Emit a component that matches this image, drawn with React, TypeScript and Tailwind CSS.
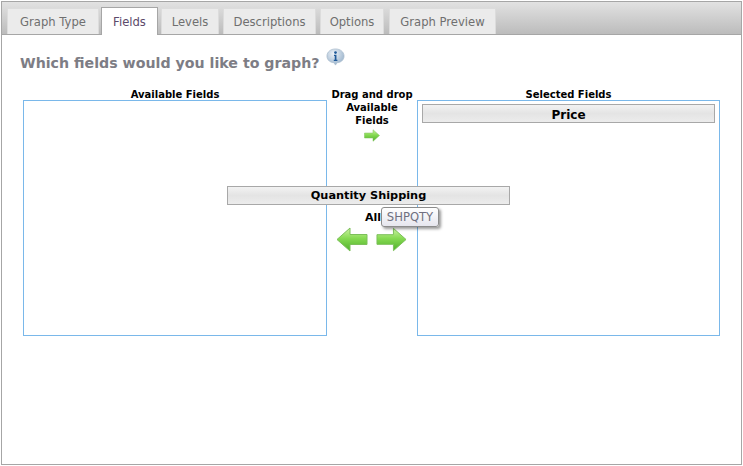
const tabs = [
  { label: 'Graph Type', className: 'w-[92px]' },
  { label: 'Fields', className: 'w-[57px] ml-[2px]', active: true },
  { label: 'Levels', className: 'w-[58px] ml-[3px]' },
  { label: 'Descriptions', className: 'w-[93px] ml-[4px]' },
  { label: 'Options', className: 'w-[64px] ml-[4px]' },
  { label: 'Graph Preview', className: 'w-[107px] ml-[5px]' },
];

const Arrow = ({ className, flip }: { className: string; flip?: boolean }) => (
  <svg viewBox="0 0 32 25" className={className}>
    <defs>
      <linearGradient id="arrowFill" x1="0" y1="0" x2="0" y2="1">
        <stop offset="0" stopColor="#cdf3a2" />
        <stop offset="0.45" stopColor="#86da52" />
        <stop offset="1" stopColor="#4fb02a" />
      </linearGradient>
    </defs>
    <path
      d="M1 7.5H18V1L31 12.5L18 24V17.5H1Z"
      fill="url(#arrowFill)"
      stroke="#7cc05a"
      strokeWidth="1"
      strokeLinejoin="round"
      transform={flip ? 'matrix(-1 0 0 1 32 0)' : undefined}
    />
  </svg>
);

const InfoIcon = () => (
  <svg viewBox="0 0 20 20" className="w-[19px] h-[19px]">
    <defs>
      <radialGradient id="infoFill" cx="0.4" cy="0.3" r="0.8">
        <stop offset="0" stopColor="#eef3f8" />
        <stop offset="1" stopColor="#8fabc6" />
      </radialGradient>
    </defs>
    <path d="M10 1C15 1 19 4 19 8.5C19 13 15 15.5 11.5 15.5L10 18L8.5 15.5C5 15.5 1 13 1 8.5C1 4 5 1 10 1Z" fill="url(#infoFill)" stroke="#a9bccd" strokeWidth="0.8" />
    <circle cx="10" cy="4.8" r="1.4" fill="#1f5a99" />
    <path d="M8.4 7.2H11V12.4H12V13.6H8.2V12.4H9.2V8.4H8.4Z" fill="#1f5a99" />
  </svg>
);

const FieldBar = ({ label, className }: { label: string; className: string }) => (
  <div className={`h-[19px] flex items-center justify-center border border-[#a8a8a8] bg-gradient-to-b from-[#f2f2f2] via-[#e4e4e4] to-[#ececec] font-bold text-black ${className}`}>
    {label}
  </div>
);

export default function App() {
  return (
    <div className="relative w-[743px] h-[466px] bg-white font-['DejaVu_Sans',sans-serif] overflow-hidden pt-px pl-px">
      <div className="w-[741px] h-[464px] border border-[#a6a6a6]">
        <div className="h-[33px] flex items-end pl-[5px] border-b border-[#a6a6a6] bg-gradient-to-b from-[#e2e2e2] to-[#bcbcbc]">
          {tabs.map((tab) =>
            tab.active ? (
              <div key={tab.label} className={`${tab.className} h-[28px] pt-[2px] -mb-px flex items-center justify-center bg-white border border-b-0 border-[#a6a6a6] text-[11.6px] text-[#5c4a6a]`}>
                {tab.label}
              </div>
            ) : (
              <div key={tab.label} className={`${tab.className} h-[26px] pt-[2px] flex items-center justify-center bg-[#ebebeb] border-x border-t border-[#dcdcdc] text-[11.6px] text-[#6f6f6f]`}>
                {tab.label}
              </div>
            )
          )}
        </div>

        <div className="pl-[18px] pt-[14px] flex items-start">
          <h1 className="text-[14.2px] leading-[28px] font-bold text-[#7d7d85]">Which fields would you like to graph?</h1>
          <div className="ml-[6px] -mt-[1px]"><InfoIcon /></div>
        </div>

        <div className="pl-[21px] mt-[11px] flex items-start text-[10px] font-bold text-black">
          <div className="w-[304px]">
            <div className="h-[12px] leading-[13px] text-center">Available Fields</div>
            <div className="h-[236px] border border-[#7ab8ea]" />
          </div>

          <div className="w-[90px] flex flex-col items-center">
            <div className="leading-[13px] text-center w-[84px]">Drag and drop Available Fields</div>
            <Arrow className="w-[16px] h-[13px] mt-[2px]" />
            <div className="mt-[69px] text-[11px] leading-[14px] self-start ml-[38px]">All</div>
            <div className="mt-[2px] -ml-[1px] flex gap-[8px]">
              <Arrow flip className="w-[32px] h-[25px]" />
              <Arrow className="w-[31px] h-[25px]" />
            </div>
          </div>

          <div className="w-[303px]">
            <div className="h-[12px] leading-[13px] text-center">Selected Fields</div>
            <div className="h-[236px] border border-[#7ab8ea] pt-[3px] px-[4px]">
              <FieldBar label="Price" className="w-full text-[12px] pt-[2px]" />
            </div>
          </div>
        </div>
      </div>

      {/* item being dragged */}
      <FieldBar label="Quantity Shipping" className="absolute left-[227px] top-[186px] w-[283px] text-[11.3px] pt-px" />
      <div className="absolute left-[381px] top-[207px] w-[58px] h-[20px] pt-px flex items-center justify-center rounded-[3px] border border-[#8c8c8c] bg-gradient-to-b from-white to-[#e6e6ee] shadow-[2px_2px_3px_rgba(0,0,0,0.4)] text-[11.6px] text-[#6f6f80]">
        SHPQTY
      </div>
    </div>
  );
}
